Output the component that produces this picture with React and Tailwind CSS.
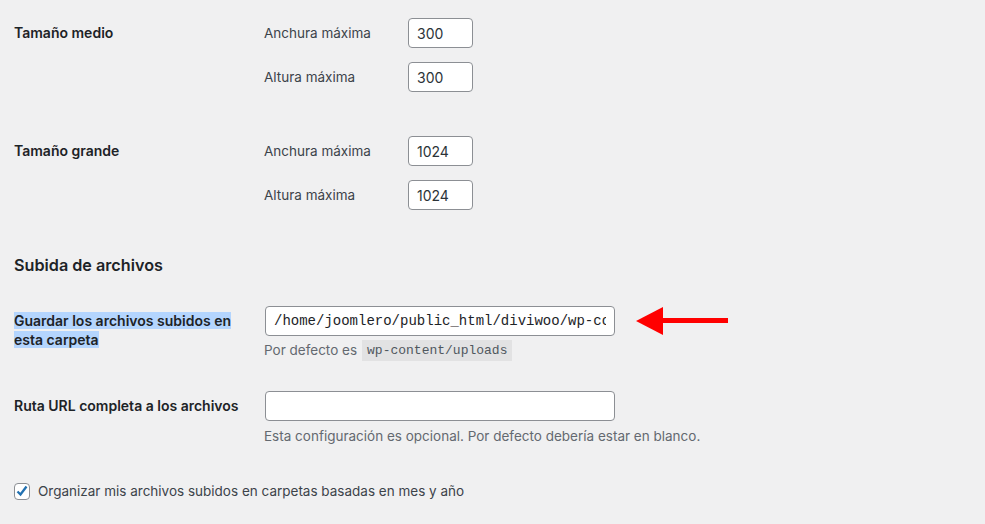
import React from 'react';

const font = { fontFamily: 'Inter, "Noto Sans", sans-serif' };
const mono = { fontFamily: '"Liberation Mono", monospace' };

function SizeRow({ title, w, h, className = '' }) {
  return (
    <div className={`flex ${className}`}>
      <div className="w-[250px] pt-[5px] text-[14px] font-semibold leading-[19px] text-[#1d2327]">{title}</div>
      <div className="flex flex-col gap-[14px]">
        {[['Anchura máxima', w], ['Altura máxima', h]].map(([label, value]) => (
          <div key={label} className="flex items-center">
            <span className="w-[144px] text-[13.5px] text-[#3c434a]">{label}</span>
            <input
              readOnly
              value={value}
              className="h-[30px] w-[65px] rounded-[4px] border border-[#8c8f94] bg-white px-[8px] text-[14px] text-[#2c3338] outline-none"
            />
          </div>
        ))}
      </div>
    </div>
  );
}

export default function App() {
  return (
    <div className="h-[524px] w-[985px] overflow-hidden bg-[#f0f0f1] pl-[14px] pt-[18px]" style={font}>
      <SizeRow title="Tamaño medio" w="300" h="300" />
      <SizeRow title="Tamaño grande" w="1024" h="1024" className="mt-[44px]" />

      <h2 className="mt-[44px] text-[16.2px] font-semibold leading-[23px] text-[#1d2327]">Subida de archivos</h2>

      {/* Upload path */}
      <div className="mt-[29px] flex">
        <div className="w-[251px] pr-[18px] pt-[5px] text-[14px] font-semibold leading-[19px] text-[#1d2327]">
          <span className="bg-[#b4d5fe]">Guardar los archivos subidos en esta carpeta</span>
        </div>
        <div className="flex flex-col">
          <div className="flex items-center">
            <input
              readOnly
              value="/home/joomlero/public_html/diviwoo/wp-content/uploads"
              className="h-[30px] w-[350px] rounded-[4px] border border-[#8c8f94] bg-white px-[8px] text-[14px] text-[#1d2327] outline-none"
              style={mono}
            />
            <svg width="92" height="30" viewBox="0 0 92 30" className="ml-[21px]">
              <polygon points="0,15 27,1 27,29" fill="#ff0000" />
              <rect x="26" y="12" width="66" height="5" fill="#ff0000" />
            </svg>
          </div>
          <p className="-ml-px mt-[4px] flex items-center text-[13.5px] text-[#646970]">
            Por defecto es
            <code
              className="ml-[5px] bg-[#e2e2e3] px-[5px] py-[2px] text-[13px] leading-[17px] text-[#50575e]"
              style={mono}
            >
              wp-content/uploads
            </code>
          </p>
        </div>
      </div>

      {/* URL path */}
      <div className="mt-[30px] flex">
        <div className="w-[251px] pt-[5px] text-[14px] font-semibold leading-[19px] text-[#1d2327]">Ruta URL completa a los archivos</div>
        <div className="flex flex-col">
          <input
            readOnly
            value=""
            className="h-[30px] w-[350px] rounded-[4px] border border-[#8c8f94] bg-white px-[8px] text-[14px] outline-none"
          />
          <p className="-ml-px mt-[6px] text-[13.5px] leading-[19px] text-[#646970]">
            Esta configuración es opcional. Por defecto debería estar en blanco.
          </p>
        </div>
      </div>

      {/* Checkbox */}
      <label className="mt-[35px] flex items-center gap-[8px] text-[13.5px] text-[#3c434a]">
        <span className="flex h-[17px] w-[16px] items-center justify-center rounded-[4px] border border-[#8c8f94] bg-white">
          <svg width="14" height="14" viewBox="0 0 14 14">
            <polyline points="2.5,7.5 5.5,10.5 11.5,2.5" fill="none" stroke="#2271b1" strokeWidth="2.3" strokeLinejoin="miter" />
          </svg>
        </span>
        Organizar mis archivos subidos en carpetas basadas en mes y año
      </label>
    </div>
  );
}
